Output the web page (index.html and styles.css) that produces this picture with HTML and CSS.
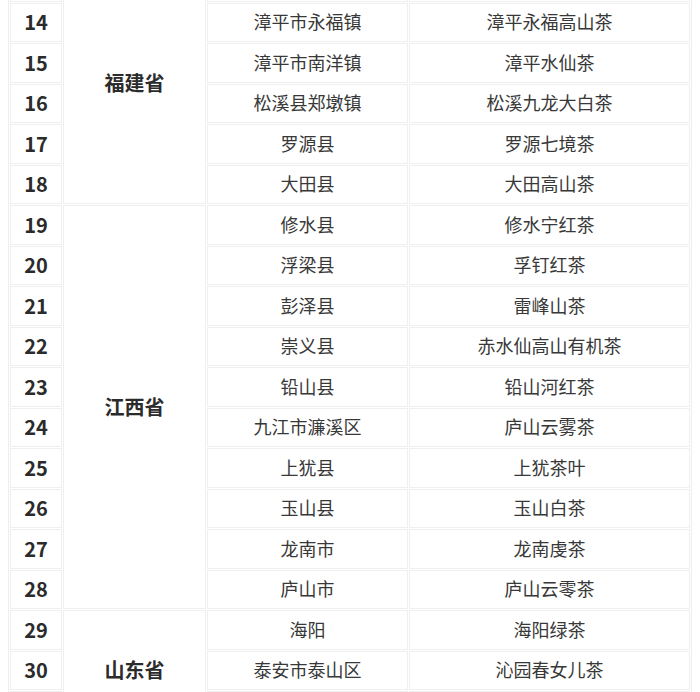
FILE: index.html
```html
<!DOCTYPE html>
<html lang="zh-CN">
<head>
<meta charset="utf-8">
<title>茶叶产区表</title>
<link rel="stylesheet" href="styles.css">
</head>
<body>
<div class="viewport">
<table class="tea">
<colgroup>
<col class="c-num"><col class="c-prov"><col class="c-county"><col class="c-prod">
</colgroup>
<tbody>
<tr><td class="num"></td><td class="prov" rowspan="6">福建省</td><td></td><td></td></tr>
<tr><td class="num">14</td><td>漳平市永福镇</td><td>漳平永福高山茶</td></tr>
<tr><td class="num">15</td><td>漳平市南洋镇</td><td>漳平水仙茶</td></tr>
<tr><td class="num">16</td><td>松溪县郑墩镇</td><td>松溪九龙大白茶</td></tr>
<tr><td class="num">17</td><td>罗源县</td><td>罗源七境茶</td></tr>
<tr><td class="num">18</td><td>大田县</td><td>大田高山茶</td></tr>
<tr><td class="num">19</td><td class="prov" rowspan="10">江西省</td><td>修水县</td><td>修水宁红茶</td></tr>
<tr><td class="num">20</td><td>浮梁县</td><td>孚钉红茶</td></tr>
<tr><td class="num">21</td><td>彭泽县</td><td>雷峰山茶</td></tr>
<tr><td class="num">22</td><td>崇义县</td><td>赤水仙高山有机茶</td></tr>
<tr><td class="num">23</td><td>铅山县</td><td>铅山河红茶</td></tr>
<tr><td class="num">24</td><td>九江市濂溪区</td><td>庐山云雾茶</td></tr>
<tr><td class="num">25</td><td>上犹县</td><td>上犹茶叶</td></tr>
<tr><td class="num">26</td><td>玉山县</td><td>玉山白茶</td></tr>
<tr><td class="num">27</td><td>龙南市</td><td>龙南虔茶</td></tr>
<tr><td class="num">28</td><td>庐山市</td><td>庐山云零茶</td></tr>
<tr><td class="num">29</td><td class="prov" rowspan="3">山东省</td><td>海阳</td><td>海阳绿茶</td></tr>
<tr><td class="num">30</td><td>泰安市泰山区</td><td>沁园春女儿茶</td></tr>
<tr><td class="num"></td><td></td><td></td></tr>
</tbody>
</table>
</div>
</body>
</html>
```

FILE: styles.css
```css
html, body {
  margin: 0;
  padding: 0;
  background: #ffffff;
}
.viewport {
  width: 700px;
  height: 692px;
  overflow: hidden;
  padding-left: 8px;
  box-sizing: border-box;
}
.tea {
  margin-top: -40px;
  width: 684px;
  border-collapse: separate;
  border-spacing: 1px;
  border: 1px solid #eeeeee;
  table-layout: fixed;
  font-family: "Noto Sans CJK SC", "Microsoft YaHei", sans-serif;
  font-size: 18px;
  color: #383838;
}
.c-num { width: 52px; }
.c-prov { width: 143px; }
.c-county { width: 201px; }
.c-prod { width: auto; }
.tea td {
  box-sizing: border-box;
  height: 39.5px;
  padding: 0;
  border: 1px solid #efefef;
  text-align: center;
  vertical-align: middle;
  line-height: 1.2;
}
.tea td.num {
  font-weight: 700;
  font-size: 20px;
  color: #2b2b2b;
}
.tea td.prov {
  font-weight: 700;
  font-size: 20px;
  color: #2b2b2b;
}
```
